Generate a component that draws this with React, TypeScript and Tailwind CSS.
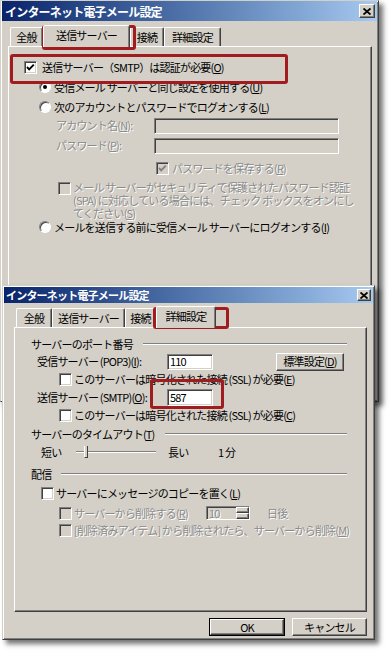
import React from "react";

const sunken =
  "border border-t-[#808080] border-l-[#808080] border-b-white border-r-white shadow-[inset_1px_1px_0_#404040,inset_-1px_-1px_0_#d4d0c8]";
const raised =
  "border border-t-white border-l-white border-r-[#404040] border-b-[#404040] shadow-[inset_-1px_-1px_0_#808080]";

function Check({ checked = false, disabled = false }: { checked?: boolean; disabled?: boolean }) {
  return (
    <span
      className={`relative inline-block w-[13px] h-[13px] shrink-0 ${sunken} ${
        disabled ? "bg-[#d4d0c8]" : "bg-white"
      }`}
    >
      {checked && (
        <svg className="absolute left-0 top-0" width="11" height="11" viewBox="0 0 11 11">
          <polyline
            points="2,5 4.2,7.3 8.8,2.7"
            fill="none"
            stroke={disabled ? "#808080" : "#000"}
            strokeWidth="1.9"
          />
        </svg>
      )}
    </span>
  );
}

function Radio({ checked = false }: { checked?: boolean }) {
  return (
    <span className="relative inline-flex items-center justify-center w-[12px] h-[12px] shrink-0 rounded-full bg-white border border-t-[#808080] border-l-[#808080] border-b-white border-r-white shadow-[inset_1px_1px_0_#404040]">
      {checked && <span className="w-[4px] h-[4px] rounded-full bg-black" />}
    </span>
  );
}

function U({ c }: { c: string }) {
  return (
    <>
      (<span className="underline underline-offset-1">{c}</span>)
    </>
  );
}

function Dis({ children }: { children: React.ReactNode }) {
  return <span className="text-[#8a8a8a] [text-shadow:1px_1px_0_#ffffff]">{children}</span>;
}

function CloseBtn({ big = false }: { big?: boolean }) {
  return (
    <span
      className={`flex items-center justify-center bg-[#d4d0c8] ${raised} ${
        big ? "w-[16px] h-[14px]" : "w-[14px] h-[12px]"
      }`}
    >
      <svg width="8" height="7" viewBox="0 0 8 7">
        <path d="M0.5 0.5 L7.5 6.5 M7.5 0.5 L0.5 6.5" stroke="#000" strokeWidth="1.8" />
      </svg>
    </span>
  );
}

function GroupLabel({ children }: { children: React.ReactNode }) {
  return (
    <div className="flex items-center h-[14px] pl-[16px] pr-[19px]">
      <span className="whitespace-nowrap">{children}</span>
      <span className="flex-1 ml-[10px] h-[2px] border-t border-t-[#808080] border-b border-b-white" />
    </div>
  );
}

function Tab({
  label,
  selected = false,
  w,
}: {
  label: string;
  selected?: boolean;
  w: string;
}) {
  return (
    <div
      className={`${w} flex items-center justify-center whitespace-nowrap bg-[#d4d0c8] rounded-t-[2px] border-t border-l border-t-white border-l-white border-r border-r-[#404040] shadow-[inset_-1px_0_0_#808080] ${
        selected ? "h-[22px] -mb-[1px] relative z-10 pb-[2px]" : "h-[19px]"
      }`}
    >
      {label}
    </div>
  );
}

export default function App() {
  return (
    <div className={'relative w-[390px] h-[651px] bg-white overflow-hidden text-[11px] leading-[13px] tracking-[-0.8px] text-black font-["Noto_Sans_CJK_JP","Noto_Sans",sans-serif]'}>
      {/* Top window */}
      <div className="absolute left-0 top-0 w-[379px] h-[402px] bg-[#d4d0c8] border border-t-[#d4d0c8] border-l-[#d4d0c8] border-r-[#404040] border-b-[#404040] shadow-[inset_1px_1px_0_#fff,inset_-1px_-1px_0_#808080,4px_4px_5px_rgba(0,0,0,0.55)] flex flex-col">
        <div className="mx-[1px] h-[20px] flex items-center justify-between pl-[3px] pr-[2px] bg-linear-to-r from-[#0a246a] to-[#a6caf0]">
          <span className="text-white font-bold text-[12px]">インターネット電子メール設定</span>
          <CloseBtn big />
        </div>
        <div className="mt-[4px] ml-[9px] flex items-end h-[21px]">
          <Tab label="全般" w="w-[33px]" />
          <Tab label="送信サーバー" w="w-[87px]" selected />
          <Tab label="接続" w="w-[34px]" />
          <Tab label="詳細設定" w="w-[57px]" />
        </div>
        <div className="ml-[7px] w-[364px] flex-1 border-t border-l border-t-white border-l-white border-r border-r-[#404040] shadow-[inset_-1px_0_0_#808080] flex flex-col pt-[12px]">
          <div className="h-[16px] flex items-center pl-[15px]">
            <Check checked />
            <span className="ml-[5px] whitespace-nowrap">
              送信サーバー（SMTP）は認証が必要<U c="O" />
            </span>
          </div>
          <div className="mt-[4px] h-[16px] flex items-center pl-[30px]">
            <Radio checked />
            <span className="ml-[3px] whitespace-nowrap">
              受信メール サーバーと同じ設定を使用する<U c="U" />
            </span>
          </div>
          <div className="mt-[4px] h-[16px] flex items-center pl-[30px]">
            <Radio />
            <span className="ml-[3px] whitespace-nowrap">
              次のアカウントとパスワードでログオンする<U c="L" />
            </span>
          </div>
          <div className="mt-[2px] h-[17px] flex items-center pl-[47px]">
            <span className="w-[98px] whitespace-nowrap">
              <Dis>
                アカウント名<U c="N" />:
              </Dis>
            </span>
            <span className={`w-[185px] h-[16px] bg-[#d4d0c8] ${sunken}`} />
          </div>
          <div className="mt-[3px] h-[17px] flex items-center pl-[47px]">
            <span className="w-[98px] whitespace-nowrap">
              <Dis>
                パスワード<U c="P" />:
              </Dis>
            </span>
            <span className={`w-[185px] h-[16px] bg-[#d4d0c8] ${sunken}`} />
          </div>
          <div className="mt-[6px] h-[16px] flex items-center pl-[147px]">
            <Check checked disabled />
            <span className="ml-[3px] whitespace-nowrap">
              <Dis>
                パスワードを保存する<U c="R" />
              </Dis>
            </span>
          </div>
          <div className="mt-[5px] flex items-start pl-[49px]">
            <span className="mt-[1px]">
              <Check disabled />
            </span>
            <div className="ml-[2px] flex flex-col text-[#8a8a8a] [text-shadow:1px_1px_0_#ffffff]">
              <div className="h-[13px] whitespace-nowrap">メール サーバーがセキュリティで保護されたパスワード認証</div>
              <div className="h-[13px] whitespace-nowrap">(SPA) に対応している場合には、チェック ボックスをオンにし</div>
              <div className="h-[13px] whitespace-nowrap">
                てください<U c="S" />
              </div>
            </div>
          </div>
          <div className="h-[14px] flex items-center pl-[30px]">
            <Radio />
            <span className="ml-[3px] whitespace-nowrap">
              メールを送信する前に受信メール サーバーにログオンする<U c="I" />
            </span>
          </div>
        </div>
      </div>

      {/* Bottom window */}
      <div className="absolute left-[2px] top-[285px] w-[373px] h-[355px] bg-[#d4d0c8] border border-t-[#d4d0c8] border-l-[#d4d0c8] border-r-[#404040] border-b-[#404040] shadow-[inset_1px_1px_0_#fff,inset_-1px_-1px_0_#808080,4px_4px_5px_rgba(0,0,0,0.55)] flex flex-col">
        <div className="mx-[1px] mt-[1px] h-[16px] flex items-center justify-between pl-[2px] pr-[2px] bg-linear-to-r from-[#0a246a] to-[#a6caf0]">
          <span className="text-white font-bold">インターネット電子メール設定</span>
          <CloseBtn />
        </div>
        <div className="mt-[3px] ml-[13px] flex items-end h-[21px]">
          <Tab label="全般" w="w-[36px]" />
          <Tab label="送信サーバー" w="w-[73px]" />
          <Tab label="接続" w="w-[31px]" />
          <Tab label="詳細設定" w="w-[60px]" selected />
        </div>
        <div className="ml-[11px] w-[353px] h-[285px] border border-t-white border-l-white border-r-[#404040] border-b-[#404040] shadow-[inset_-1px_-1px_0_#808080] flex flex-col pt-[9px]">
          <GroupLabel>サーバーのポート番号</GroupLabel>
          <div className="mt-[1px] h-[19px] flex items-center pl-[22px] pr-[22px]">
            <span className="w-[130px] whitespace-nowrap">
              受信サーバー (POP3)<U c="I" />:
            </span>
            <span className={`w-[46px] h-[16px] bg-white ${sunken} flex items-center pl-[2px]`}>110</span>
            <span className={`ml-auto w-[68px] h-[18px] ${raised} flex items-center justify-center whitespace-nowrap`}>
              標準設定<U c="D" />
            </span>
          </div>
          <div className="mt-[1px] h-[15px] flex items-center pl-[44px]">
            <Check />
            <span className="ml-[2px] whitespace-nowrap">
              このサーバーは暗号化された接続 (SSL) が必要<U c="E" />
            </span>
          </div>
          <div className="mt-[1px] h-[19px] flex items-center pl-[22px]">
            <span className="w-[130px] whitespace-nowrap">
              送信サーバー (SMTP)<U c="O" />:
            </span>
            <span className={`w-[46px] h-[17px] bg-white ${sunken} flex items-center pl-[2px]`}>587</span>
          </div>
          <div className="mt-[1px] h-[14px] flex items-center pl-[44px]">
            <Check />
            <span className="ml-[2px] whitespace-nowrap">
              このサーバーは暗号化された接続 (SSL) が必要<U c="C" />
            </span>
          </div>
          <div className="mt-[5px]">
            <GroupLabel>
              サーバーのタイムアウト<U c="T" />
            </GroupLabel>
          </div>
          <div className="mt-[4px] h-[14px] flex items-center pl-[26px]">
            <span className="w-[35px]">短い</span>
            <span className="relative w-[80px] h-[14px] flex items-center">
              <span className="w-full h-[2px] border-t border-t-[#808080] border-b border-b-white" />
              <span className="absolute left-[8px] top-[1px] w-[4px] h-[12px] bg-[#d4d0c8] border-l border-l-white border-r border-r-[#404040] border-b border-b-[#404040]" />
            </span>
            <span className="ml-[12px] w-[50px]">長い</span>
            <span>1 分</span>
          </div>
          <div className="mt-[8px]">
            <GroupLabel>配信</GroupLabel>
          </div>
          <div className="mt-[6px] h-[13px] flex items-center pl-[26px]">
            <Check />
            <span className="ml-[2px] whitespace-nowrap">
              サーバーにメッセージのコピーを置く<U c="L" />
            </span>
          </div>
          <div className="mt-[6px] h-[14px] flex items-center pl-[44px]">
            <Check disabled />
            <span className="ml-[2px] w-[132px] whitespace-nowrap">
              <Dis>
                サーバーから削除する<U c="R" />
              </Dis>
            </span>
            <span className={`w-[44px] h-[14px] bg-[#d4d0c8] ${sunken} flex items-center`}>
              <span className="flex-1 pl-[2px]">
                <Dis>10</Dis>
              </span>
              <span className="w-[13px] h-full flex flex-col">
                <span className={`flex-1 ${raised}`} />
                <span className={`flex-1 ${raised}`} />
              </span>
            </span>
            <span className="ml-[17px]">
              <Dis>日後</Dis>
            </span>
          </div>
          <div className="mt-[3px] h-[14px] flex items-center pl-[44px]">
            <Check disabled />
            <span className="ml-[2px] whitespace-nowrap">
              <Dis>
                [削除済みアイテム] から削除されたら、サーバーから削除<U c="M" />
              </Dis>
            </span>
          </div>
        </div>
        <div className="mt-[6px] flex justify-end gap-[7px] pr-[7px]">
          <span className="w-[76px] h-[18px] border border-black flex">
            <span className={`flex-1 ${raised} flex items-center justify-center`}>OK</span>
          </span>
          <span className={`w-[75px] h-[18px] ${raised} flex items-center justify-center`}>キャンセル</span>
        </div>
      </div>

      {/* Red annotation boxes */}
      <div className="absolute left-[42px] top-[25px] w-[94px] h-[25px] border-[3px] border-[#a11c1f] rounded-[3px]" />
      <div className="absolute left-[10px] top-[54px] w-[278px] h-[30px] border-[3px] border-[#a11c1f] rounded-[3px]" />
      <div className="absolute left-[153px] top-[307px] w-[76px] h-[22px] border-[3px] border-[#a11c1f] rounded-[3px]" />
      <div className="absolute left-[150px] top-[379px] w-[74px] h-[30px] border-[3px] border-[#a11c1f] rounded-[3px]" />
    </div>
  );
}
